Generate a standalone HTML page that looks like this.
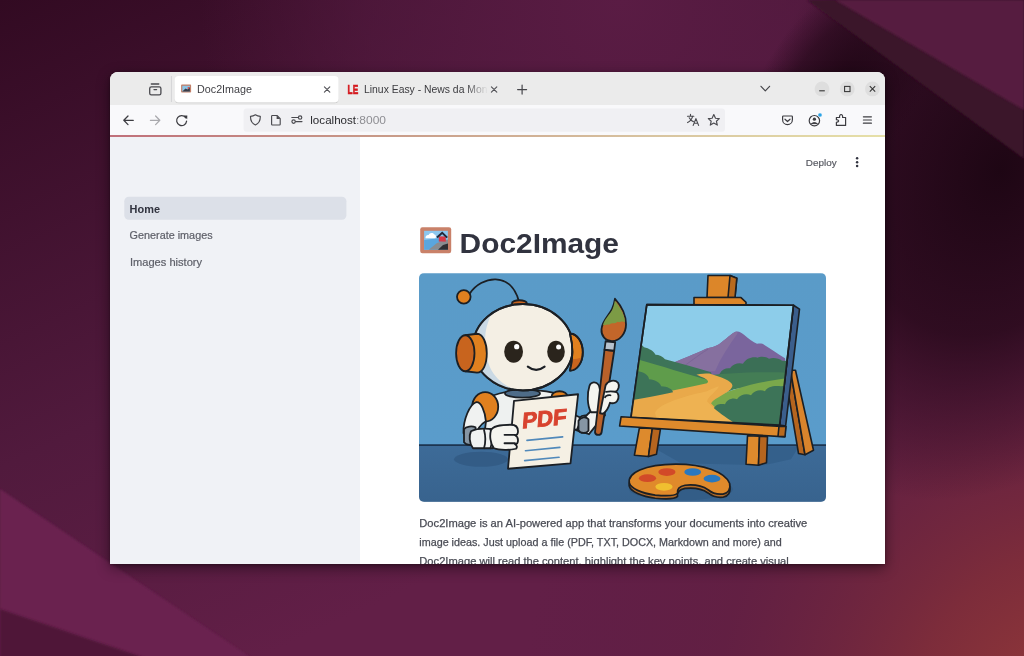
<!DOCTYPE html>
<html><head><meta charset="utf-8">
<style>
*{margin:0;padding:0;box-sizing:border-box}
html,body{width:1024px;height:656px;overflow:hidden;font-family:"Liberation Sans",sans-serif}
body{position:relative;background:#3a0f2c}
.abs{position:absolute}
#bg{position:absolute;left:0;top:0}
#win{position:absolute;left:110px;top:72px;width:775px;height:492px;border-radius:8px 8px 0 0;overflow:hidden;background:#fff;box-shadow:0 4px 14px rgba(0,0,0,.45),0 1px 3px rgba(0,0,0,.3)}
#tabs{position:absolute;left:0;top:0;width:775px;height:33px;background:#ebebeb}
#toolbar{position:absolute;left:0;top:33px;width:775px;height:31px;background:#f9f9fb}
#deco{position:absolute;left:0;top:63px;width:775px;height:2.4px;background:linear-gradient(90deg,#c0707a,#c89a88 35%,#d8c4a0 70%,#e6e0a8)}
#side{position:absolute;left:0;top:65px;width:250px;height:427px;background:#f0f2f6}
#main{position:absolute;left:250px;top:65px;width:525px;height:427px;background:#fff}
.t{position:absolute;white-space:nowrap;transform-origin:0 0}
#chrome,#content,#illus svg{filter:blur(0.35px)}
</style></head><body>
<svg id="bg" width="1024" height="656" viewBox="0 0 1024 656">
  <defs>
    <linearGradient id="g0" gradientUnits="userSpaceOnUse" x1="0" y1="0" x2="300" y2="640">
      <stop offset="0" stop-color="#320a22"/>
      <stop offset="0.6" stop-color="#511a3d"/>
      <stop offset="1" stop-color="#621f47"/>
    </linearGradient>
    <radialGradient id="gtop" gradientUnits="userSpaceOnUse" cx="620" cy="0" r="420">
      <stop offset="0" stop-color="#5a1c44" stop-opacity="1"/>
      <stop offset="0.6" stop-color="#561b42" stop-opacity="0.6"/>
      <stop offset="1" stop-color="#551a40" stop-opacity="0"/>
    </radialGradient>
    <radialGradient id="gred" cx="1080" cy="720" r="560" gradientUnits="userSpaceOnUse">
      <stop offset="0" stop-color="#963b38"/>
      <stop offset="0.3" stop-color="#7e2d3a" stop-opacity="0.95"/>
      <stop offset="0.65" stop-color="#62203f" stop-opacity="0.5"/>
      <stop offset="1" stop-color="#5c1d43" stop-opacity="0"/>
    </radialGradient>
    <radialGradient id="gdark" gradientUnits="userSpaceOnUse" cx="1000" cy="170" r="300" gradientTransform="translate(1000 170) rotate(25) scale(0.85 1.15) translate(-1000 -170)">
      <stop offset="0" stop-color="#1e0614" stop-opacity="1"/>
      <stop offset="0.5" stop-color="#230818" stop-opacity="0.8"/>
      <stop offset="0.8" stop-color="#2a0a1e" stop-opacity="0.35"/>
      <stop offset="1" stop-color="#2a0a1e" stop-opacity="0"/>
    </radialGradient>
    <radialGradient id="gdark3" gradientUnits="userSpaceOnUse" cx="840" cy="90" r="110" gradientTransform="translate(840 90) rotate(35) scale(0.7 1.4) translate(-840 -90)">
      <stop offset="0" stop-color="#1e0614" stop-opacity="0.95"/>
      <stop offset="0.6" stop-color="#230818" stop-opacity="0.6"/>
      <stop offset="1" stop-color="#2a0a1e" stop-opacity="0"/>
    </radialGradient>
    <filter id="bl" x="-20%" y="-20%" width="140%" height="140%"><feGaussianBlur stdDeviation="0.8"/></filter>
  </defs>
  <rect width="1024" height="656" fill="url(#g0)"/>
  <rect width="1024" height="656" fill="url(#gtop)"/>
  <rect width="1024" height="656" fill="url(#gred)"/>
  <rect width="1024" height="656" fill="url(#gdark)"/>
  <rect width="1024" height="656" fill="url(#gdark3)"/>
  <polygon points="807,0 1024,0 1024,159" fill="#3a1229" filter="url(#bl)"/>
  <polygon points="835,0 1024,0 1024,110" fill="#561c41" filter="url(#bl)"/>
  <polygon points="0,489 284,680 0,680" fill="#6a2350" filter="url(#bl)"/>
  <polygon points="0,609 210,680 0,680" fill="#4f1939" filter="url(#bl)"/>
</svg>
<div id="win">
  <div id="tabs"></div>
  <div id="toolbar"></div>
  <div id="deco"></div>
  <div id="side"></div>
  <div id="main"></div>
</div>



<div id="illus" class="abs" style="left:419px;top:273px;width:407px;height:228.5px;border-radius:5px;overflow:hidden">
<svg width="407" height="229" viewBox="0 0 407 228.5">
  <defs>
    <clipPath id="cv"><polygon points="227.8,31.4 374.5,32 360.6,151.9 212,144"/></clipPath>
    <linearGradient id="sky" x1="0" y1="0" x2="0" y2="1"><stop offset="0" stop-color="#5a9bc8"/><stop offset="1" stop-color="#5a9ccb"/></linearGradient>
  </defs>
  <rect width="407" height="172" fill="url(#sky)"/>
  <linearGradient id="floor" x1="0" y1="0" x2="0" y2="1"><stop offset="0" stop-color="#3d6b98"/><stop offset="1" stop-color="#38638e"/></linearGradient>
  <rect y="171.6" width="407" height="57" fill="url(#floor)"/>
  <line x1="0" y1="171.8" x2="407" y2="171.8" stroke="#1d3550" stroke-width="1.7"/>
  <!-- floor shadows -->
  <ellipse cx="62" cy="186" rx="27" ry="7.5" fill="#335c86"/>
  <polygon points="232,173 380,173 372,186 345,192 262,190" fill="#34608b"/>

  <g stroke="#1b1f24" stroke-width="1.6" stroke-linejoin="round" stroke-linecap="round">
  <!-- back leg of easel -->
  <polygon points="366,100 371.5,97 386,181.5 379.5,180.2" fill="#b5651f"/>
  <polygon points="371.5,97 376.5,97 394.5,177 386,181.5" fill="#d9842c"/>
  <!-- easel post -->
  <polygon points="289,2.2 311,2.2 317.8,5 316,24.3 288,24.3" fill="#dc8629"/>
  <polygon points="311,2.2 317.8,5 316,24.3 309,24.3" fill="#b86a1e"/>
  <polygon points="275,24.3 322,24.3 327,29 327,32 275,32" fill="#dc8629"/>

  <!-- canvas side -->
  <polygon points="374.5,32 380.5,35.9 366.6,152.9 360.6,151.9" fill="#3b5e8c"/>
  <!-- canvas front -->
  <polygon points="227.8,31.4 374.5,32 360.6,151.9 212,144" fill="#8dcdea"/>
  </g>
  <g clip-path="url(#cv)">
    <!-- mountain -->
    <path d="M249 92 C262 86 278 80 287 75.5 C292 74 296 73.5 300 71 C307 66 313 60 316.5 58.6 C319.5 57.6 322 59 325 61.5 C330 65.5 334 69 338 70.6 C341 70.2 343 70 345 71.5 C352 76 358 80 366 85 L370 112 L249 112 Z" fill="#7a659d"/>
    <path d="M251 91 C262 86 278 80 287 75.5 C292 74 296 73.5 300 71 C307 66 313 60 316.5 58.6 C318.5 58 319 59 318 61 C310 72 302 84 296 98 L251 98 Z" fill="#86709f"/>
    <path d="M262 95 C272 88 282 80 289 76" fill="none" stroke="#6f5b90" stroke-width="0.8" opacity="0.6"/>
    <!-- right dark hills -->
    <path d="M301 100 C303 96 307 94.5 311 95 C314 90.5 320 89 324 90.5 C327 85 334 83 338.5 84.5 C342 82.5 348 83.5 350 85.5 C354 84 360 85 363 87.5 L372 88 L372 112 L292 112 Z" fill="#3b6f56"/>
    <!-- right mid green -->
    <path d="M280 103 C305 100 335 98 372 99.5 L372 112 C350 112 330 113 315 116 L280 130 Z" fill="#447d55"/>
    <!-- right light green -->
    <path d="M296 124 C312 116 340 108 372 104.5 L372 160 L280 160 L280 124 Z" fill="#7aa84b"/>
    <!-- left dark hills -->
    <path d="M210 70 C216 68 222 70 225 74 C230 75 235 78 236.5 81.5 C240 81.5 244 83.5 246 86 C262 90 278 95 292 99 L294 106 L210 106 Z" fill="#3d7458"/>
    <!-- left green field -->
    <path d="M210 85 L220 86.5 C240 92 268 101 292 107.5 L296 118 L210 130 Z" fill="#5f9c4b"/>
    <!-- road -->
    <path d="M277.4 101.4 C283 100.6 288 100.2 291.2 100.4 C302 104 316 108 313 114 C310 120 296 124 292 130 C300 140 318 146 325 152 L205 152 L205 126 C230 122 262 116 288 110 C292 107 284 104 277.4 101.4 Z" fill="#e9a94a"/>
    <path d="M236 140 C238 132 260 124 288 118 C292 116 296 114 300 113 C298 118 290 122 288 128 C296 138 310 144 318 152 L240 152 Z" fill="#f0b655" opacity="0.7"/>
    <!-- left dark bushes -->
    <path d="M205 92 C212 92 217 94 218 98 C224 98 230 102 230 106 C236 106 242 110 242 113 C248 113 254 116 254 119 C240 122 225 125 205 128 Z" fill="#3d7458"/>
    <!-- right dark bushes -->
    <path d="M295 135 C296 131 302 130 306 131 C308 126 314 124 318 126 C321 121 328 120 332 122 C335 117 342 116 346 118 C348 113 356 112 362 113 L372 112 L372 160 L330 160 C320 152 304 143 295 135 Z" fill="#3d7458"/>
  </g>
  <g stroke="#1b1f24" stroke-width="1.7" stroke-linejoin="round" stroke-linecap="round" fill="none">
    <polygon points="227.8,31.4 374.5,32 360.6,151.9 212,144"/>
  </g>

  <g stroke="#1b1f24" stroke-width="1.6" stroke-linejoin="round" stroke-linecap="round">
  <!-- easel legs front -->
  <polygon points="220.4,154.6 233.3,155.3 229.5,183.2 215.4,182" fill="#dd8a2d"/>
  <polygon points="233.3,155.3 241.4,156.1 237.5,180.9 229.5,183.2" fill="#b5651f"/>
  <polygon points="328.5,162.5 340.5,163 339.5,192 327,191" fill="#dd8a2d"/>
  <polygon points="340.5,163 348.5,163.5 347.5,189.5 339.5,192" fill="#b5651f"/>
  <!-- ledge -->
  <polygon points="202.1,143.5 366.6,153.5 365.8,163.6 200.6,152.8" fill="#de8a2c"/>
  <polygon points="360,153 367,153.3 366,163.3 359,163" fill="#b86a1e"/>
  </g>

  <!-- palette -->
  <ellipse cx="262" cy="216" rx="52" ry="11" fill="#335d87"/>
  <g stroke="#1b1f24" stroke-width="1.7" stroke-linejoin="round">
    <path d="M210.4 210.1 C208 200 225 191 257 190.8 C285 190.8 306 199 310.6 210 C312 216 309 220 304 220.8 C298 221.5 292 219 289 216.5 C284 213 276 211 266 212 C260 213 258 216 258.5 220 C256 222.5 248 223 236.2 221.8 C222 220 212 215 210.4 210.1 Z" fill="#b56c27" transform="translate(0 3.2)"/>
    <path d="M210.4 210.1 C208 200 225 191 257 190.8 C285 190.8 306 199 310.6 210 C312 216 309 220 304 220.8 C298 221.5 292 219 289 216.5 C284 213 276 211 266 212 C260 213 258 216 258.5 220 C256 222.5 248 223 236.2 221.8 C222 220 212 215 210.4 210.1 Z" fill="#e08a2b"/>
  </g>
  <ellipse cx="228.5" cy="204.9" rx="8.6" ry="3.9" fill="#d24a28"/>
  <ellipse cx="247.9" cy="198.8" rx="8.6" ry="3.9" fill="#d24a28"/>
  <ellipse cx="273.7" cy="198.8" rx="8.4" ry="3.8" fill="#2a78bf"/>
  <ellipse cx="293" cy="205.4" rx="8.4" ry="3.8" fill="#2a78bf"/>
  <ellipse cx="245" cy="213.6" rx="8.6" ry="3.9" fill="#f0c030"/>

  <!-- ROBOT -->
  <g stroke="#1b1f24" stroke-width="1.8" stroke-linejoin="round" stroke-linecap="round">
    <path d="M51 20 C62 3 92 -3 100 28.5" fill="none"/>
    <circle cx="44.8" cy="23.6" r="6.8" fill="#e0801f"/>
    <ellipse cx="100.4" cy="30" rx="7.5" ry="3" fill="#c8641e"/>

    <!-- torso -->
    <path d="M70 124 C88 115 124 115 142 122 L148 172 L64 172 Z" fill="#eef1f0"/>
    <!-- right shoulder -->
    <ellipse cx="140.5" cy="123.5" rx="8" ry="5.5" fill="#e0801f"/>
    <!-- right arm -->
    <path d="M145 136 C152 140 158 143 163 145 L168 160 C158 158 150 154 146 150 Z" fill="#eef1f0"/>
    <path d="M160.6 144.5 C163 141.5 169 141.5 172 144 L172 157 C169 160 163 160 160 158 Z" fill="#7f8e9b"/>
    <!-- neck -->
    <ellipse cx="103.5" cy="120.2" rx="17.5" ry="4.2" fill="#4e6c89"/>
    <!-- left shoulder pad -->
    <ellipse cx="66.2" cy="133.6" rx="13" ry="14.7" fill="#e0801f"/>
    <!-- upper arm -->
    <path d="M66.9 148 C66 138 62 128 57 129 C51 131 44 146 44.5 160 L58 162 C58 156 60 152 66.9 148 Z" fill="#f0f2f1"/>
    <!-- elbow -->
    <path d="M45 156 C47 153 53 152.5 56.5 154 L57 171 C53 172.5 47 172 45 169 Z" fill="#8696a4"/>
    <!-- forearm -->
    <path d="M52 158 C58 155 66 155 74 156 L74 175 L54 175 C50 170 50 162 52 158 Z" fill="#f0f2f1"/>
    <path d="M65 156.5 C66.5 162 66.5 170 65 175 M71.5 156 C73 162 73 170 71.5 175" fill="none"/>
  </g>
  <!-- ears behind? head -->
  <g stroke="#1b1f24" stroke-width="1.8" stroke-linejoin="round" stroke-linecap="round">
    <ellipse cx="103.9" cy="74" rx="50" ry="43.2" fill="#f4efe4"/>
  </g>
  <clipPath id="headclip"><ellipse cx="103.9" cy="74" rx="50" ry="43.2"/></clipPath>
  <path clip-path="url(#headclip)" d="M40 20 L84 20 C75 34 68 48 66.5 60 C65 74 67 90 75 101 C81 109 89 114 99 118 L40 125 Z" fill="#cad9e4"/>
  <g stroke="#1b1f24" stroke-width="2" fill="none"><ellipse cx="103.9" cy="74" rx="50" ry="43.2"/></g>
  <g stroke="#1b1f24" stroke-width="1.8" stroke-linejoin="round" stroke-linecap="round">
    <!-- left ear -->
    <path d="M46.3 62 L58 60.5 C64 60.5 67.8 70 67.8 80 C67.8 91 64 99.4 58 99.4 L46.3 98 Z" fill="#e0801f"/>
    <ellipse cx="46.3" cy="80" rx="9.2" ry="18" fill="#c8641e"/>
    <!-- right ear -->
    <path d="M151 60.5 C158 60 163.8 69 163.8 79 C163.8 89 158 97.5 151 97.3 C154 86 154 72 151 60.5 Z" fill="#e0801f"/>
    <path d="M153.2 86 C156 86 160 85 163.2 84 C162 92 157 97.5 151 97.3 C152.5 94 153 90 153.2 86 Z" fill="#c8641e" stroke="none"/>
    <path d="M151 60.5 C158 60 163.8 69 163.8 79 C163.8 89 158 97.5 151 97.3 C154 86 154 72 151 60.5 Z" fill="none"/>
  </g>
  <!-- face -->
  <ellipse cx="94.6" cy="78.4" rx="9.4" ry="11" fill="#2a241c"/>
  <ellipse cx="137" cy="78.4" rx="8.8" ry="11" fill="#2a241c"/>
  <circle cx="97.7" cy="73.4" r="2.6" fill="#fff"/>
  <circle cx="139.6" cy="73.8" r="2.5" fill="#fff"/>
  <path d="M108.8 93.3 Q117.2 99.8 125.6 93.3" fill="none" stroke="#1b1f24" stroke-width="2.1" stroke-linecap="round"/>

  <!-- brush -->
  <g stroke="#1b1f24" stroke-width="1.8" stroke-linejoin="round" stroke-linecap="round">
    <!-- right forearm -->
    <path d="M158 156 C160 150 166 143 174 136 L184 134 L186 142 C180 148 174 156 170 161 Z" fill="#f0f2f1"/>
    <path d="M159.5 147.5 C162 143.5 167 143 169.5 146 L169.5 157.5 C167 160.5 161.5 160.5 159.5 157 Z" fill="#8696a4"/>
    <!-- thumb -->
    <path d="M172 139 C168 132 168 120 170.5 112.5 C172 108.5 177 108 179.5 111.5 C181 114 182 126 182 139 Z" fill="#f4f4ef"/>
  </g>
  <g stroke="#1b1f24" stroke-width="1.8" stroke-linejoin="round" stroke-linecap="round">
    <path d="M185.5 76.5 L195.2 77.5 L182.6 159 C182 162.5 176.5 162.5 176 159 Z" fill="#b9612a"/>
    <path d="M186.6 68 L196.2 69 L195.2 77.5 L185.5 76.5 Z" fill="#b7c2cd"/>
    <path d="M196 25.5 C200 30 207 40 207 51 C207 60 201 67.8 193 67.8 C186 67.8 182 62 182.5 56 C183 48 190 42 193 36 C194.5 33 195.5 29 196 25.5 Z" fill="#c3662a"/>
  </g>
  <path d="M195.8 27.5 C199.5 32 205.8 40.5 206 49 C203 47 201 50 198.5 48.5 C196 51 193 49 190 51.5 C188 50.5 186 52 184 52 C185 46.5 190.5 41.5 193 37 C194.5 34 195.3 30.5 195.8 27.5 Z" fill="#7c9b45"/>
  <g stroke="#1b1f24" stroke-width="1.8" stroke-linejoin="round" stroke-linecap="round">
    <!-- fingers -->
    <path d="M186.6 112 C189 107 196 106 199 109.5 C201 112.5 199.5 117 196.5 118.5 C200 119.5 200.5 125 198 128 C196.5 130 193 130.5 191 129.5 C190 133 188 138 184 140.5 L181 140 Z" fill="#f4f4ef"/>
    <path d="M187 118.6 C190 118 194 118.2 196.5 118.5 M186 124 C187 122 190 121.5 191.5 122" fill="none"/>
  </g>

  <!-- paper -->
  <g stroke="#1b1f24" stroke-width="1.8" stroke-linejoin="round">
    <polygon points="95,127.6 159.1,121 151.5,190.1 89,195.5" fill="#f5f0e4"/>
  </g>
  <text x="0" y="0" transform="translate(102.8 155.2) rotate(-5.5) skewX(-10)" font-family="Liberation Sans, sans-serif" font-weight="700" font-size="22" fill="#d8432f" stroke="#d8432f" stroke-width="0.9" textLength="44.5" lengthAdjust="spacingAndGlyphs">PDF</text>
  <g stroke="#5189ba" stroke-width="1.7" stroke-linecap="round">
    <path d="M108 167.2 L143.6 163.7"/>
    <path d="M106.5 177.5 L140.8 174.1"/>
    <path d="M105.7 187.4 L140 184"/>
  </g>
  <!-- left fist -->
  <g stroke="#1b1f24" stroke-width="1.8" stroke-linejoin="round" stroke-linecap="round">
    <path d="M72 157 C74 152 84 151.5 92 151.5 C97 151.5 99 154 99 158 C99 161 97.5 162 96 162 C98.5 163 99 165 99 167 C99 170 97.5 171 96 171 C98 172 98.5 174 97 175.5 C92 177 80 177 75 175 C71 170 70.5 162 72 157 Z" fill="#f4f4ef"/>
    <path d="M85.5 161.6 H96 M85.5 170 H96" fill="none"/>
  </g>
</svg>
</div>
<svg id="content" class="abs" style="left:0;top:0" width="1024" height="656" viewBox="0 0 1024 656" font-family="Liberation Sans, sans-serif">
  <rect x="124.3" y="196.8" width="222.1" height="23" rx="4.5" fill="#dce0e8"/>
  <text x="129.6" y="212.7" font-size="10.4" font-weight="700" fill="#31333f" textLength="30.4" lengthAdjust="spacingAndGlyphs">Home</text>
  <text x="129.6" y="239.3" font-size="10.4" fill="#5d5f68" stroke="#5d5f68" stroke-width="0.2" textLength="83" lengthAdjust="spacingAndGlyphs">Generate images</text>
  <text x="129.9" y="265.8" font-size="10.4" fill="#5d5f68" stroke="#5d5f68" stroke-width="0.2" textLength="72.2" lengthAdjust="spacingAndGlyphs">Images history</text>
  <text x="805.8" y="166" font-size="9" fill="#55575f" stroke="#55575f" stroke-width="0.15" textLength="30.8" lengthAdjust="spacingAndGlyphs">Deploy</text>
  <circle cx="857.1" cy="158.3" r="1.25" fill="#31333f"/>
  <circle cx="857.1" cy="162.2" r="1.25" fill="#31333f"/>
  <circle cx="857.1" cy="166" r="1.25" fill="#31333f"/>
  <g id="emoji">
    <rect x="420.2" y="227.2" width="31" height="26.1" rx="2.2" fill="#c98169"/>
    <rect x="424.1" y="230.8" width="23.8" height="18.9" fill="#8cc6ee"/>
    <path d="M424.1 240 L440 238 L447.9 240 V249.7 H424.1 Z" fill="#5aa6de"/>
    <path d="M425.6 238.3 C425 236 427 234.6 428.6 235 C429.4 232.6 433 232.2 434.2 234.4 C436 234.2 436.6 237 435.3 238.3 Z" fill="#fff"/>
    <path d="M428.7 249.7 L437 243 L448 239.5 V249.7 Z" fill="#8a8c90"/>
    <path d="M438 249.7 L443 245 L448 243.5 V249.7 Z" fill="#2e2e32"/>
    <rect x="438.8" y="236.4" width="7" height="5.2" fill="#d83a48"/>
    <path d="M437 237.6 L442.2 232.8 L447.2 237.6" fill="none" stroke="#23283a" stroke-width="2"/>
  </g>
  <text x="459.6" y="252.7" font-size="27.7" font-weight="700" fill="#31333f" textLength="159.4" lengthAdjust="spacingAndGlyphs">Doc2Image</text>
  <clipPath id="winclip"><rect x="110" y="72" width="775" height="492"/></clipPath>
  <g font-size="10.8" fill="#4a4c55" stroke="#4a4c55" stroke-width="0.25" clip-path="url(#winclip)">
    <text x="419.3" y="526.8" textLength="388" lengthAdjust="spacingAndGlyphs">Doc2Image is an AI-powered app that transforms your documents into creative</text>
    <text x="419.3" y="545.7" textLength="362.5" lengthAdjust="spacingAndGlyphs">image ideas. Just upload a file (PDF, TXT, DOCX, Markdown and more) and</text>
    <text x="419.3" y="564.6" textLength="369.5" lengthAdjust="spacingAndGlyphs">Doc2Image will read the content, highlight the key points, and create visual</text>
  </g>
</svg>
<svg id="chrome" class="abs" style="left:0;top:0" width="1024" height="656" viewBox="0 0 1024 656" font-family="Liberation Sans, sans-serif">
  <defs>
    <linearGradient id="fade" gradientUnits="userSpaceOnUse" x1="466" y1="0" x2="488" y2="0">
      <stop offset="0" stop-color="#3a3a3e"/>
      <stop offset="1" stop-color="#3a3a3e" stop-opacity="0"/>
    </linearGradient>
    <filter id="tabsh" x="-10%" y="-30%" width="120%" height="160%"><feDropShadow dx="0" dy="0.6" stdDeviation="0.7" flood-color="#000" flood-opacity="0.22"/></filter>
  </defs>
  <!-- firefox view icon -->
  <g fill="none" stroke="#4a4a4f" stroke-width="1.3" stroke-linecap="round" stroke-linejoin="round">
    <path d="M151.3 84 H158.8"/>
    <rect x="149.7" y="86.8" width="11.2" height="8" rx="1.6"/>
    <path d="M154 89.6 H156.6"/>
  </g>
  <line x1="171.4" y1="76" x2="171.4" y2="102" stroke="#d4d4d6" stroke-width="1"/>
  <!-- active tab -->
  <rect x="174.6" y="76" width="164" height="26.2" rx="4" fill="#fff" filter="url(#tabsh)"/>
  <!-- favicon frame -->
  <g>
    <rect x="181.1" y="84.6" width="10" height="8" rx="0.8" fill="#c1806a"/>
    <rect x="182.3" y="85.8" width="7.6" height="5.6" fill="#8cc4e6"/>
    <path d="M182.3 91.4 L185.5 88.5 L187.5 89.6 L189.9 87 V91.4 Z" fill="#3a3d48"/>
    <circle cx="188.4" cy="88" r="0.9" fill="#d84a4a"/>
  </g>
  <text x="197" y="92.5" font-size="10" fill="#3f3f44" textLength="55" lengthAdjust="spacingAndGlyphs">Doc2Image</text>
  <g stroke="#505055" stroke-width="1.1" stroke-linecap="round"><path d="M324.4 86.8 L329.8 92.2 M329.8 86.8 L324.4 92.2"/></g>
  <!-- second tab -->
  <text x="347.6" y="94" font-size="13.6" font-weight="700" fill="#d41a1f" stroke="#d41a1f" stroke-width="0.7" textLength="10.6" lengthAdjust="spacingAndGlyphs">LE</text>
  <text x="364" y="92.6" font-size="10" fill="url(#fade)" textLength="123.5" lengthAdjust="spacingAndGlyphs">Linux Easy - News da Mon</text>
  <g stroke="#505055" stroke-width="1.1" stroke-linecap="round"><path d="M491.4 86.8 L496.8 92.2 M496.8 86.8 L491.4 92.2"/></g>
  <g stroke="#45454a" stroke-width="1.2" stroke-linecap="round"><path d="M517.6 89.6 H526.6 M522.1 85.1 V94.1"/></g>
  <!-- chevron -->
  <path d="M761 86.3 L765.3 90.9 L769.6 86.3" fill="none" stroke="#45454a" stroke-width="1.2" stroke-linecap="round" stroke-linejoin="round"/>
  <!-- window controls -->
  <circle cx="822" cy="88.9" r="7.4" fill="#dedede"/>
  <circle cx="847.3" cy="88.9" r="7.4" fill="#dedede"/>
  <circle cx="872.4" cy="88.9" r="7.4" fill="#dedede"/>
  <path d="M819.2 90.8 H824.8" stroke="#333" stroke-width="1.1"/>
  <rect x="844.6" y="86.4" width="5.4" height="5.2" fill="none" stroke="#333" stroke-width="1.05"/>
  <path d="M869.8 86.2 L875.2 91.6 M875.2 86.2 L869.8 91.6" stroke="#333" stroke-width="1.05"/>

  <!-- toolbar icons -->
  <g fill="none" stroke="#3c3c41" stroke-width="1.25" stroke-linecap="round" stroke-linejoin="round">
    <path d="M123.8 120.3 H133.3 M128 116 L123.8 120.3 L128 124.6"/>
    <path d="M150.4 120.3 H159.8 M155.6 116 L159.8 120.3 L155.6 124.6" stroke="#a9a9ad"/>
    <path d="M185.8 117.8 A5 5 0 1 0 186.6 121.2"/>
  </g>
  <path d="M183.2 115.6 L187.3 115.4 L187.2 119.3 Z" fill="#3c3c41"/>
  <!-- url bar -->
  <rect x="243.6" y="108.6" width="481.4" height="23.1" rx="3" fill="#f0f0f3"/>
  <g fill="none" stroke="#4a4a4f" stroke-width="1.15" stroke-linecap="round" stroke-linejoin="round">
    <path d="M255.4 114.8 C253.8 115.9 252.2 116.3 250.5 116.3 C250.4 120.4 252 123.4 255.4 125 C258.8 123.4 260.4 120.4 260.3 116.3 C258.6 116.3 257 115.9 255.4 114.8 Z"/>
    <path d="M272.3 115.5 H277 L280.2 118.7 V124.3 Q280.2 125 279.5 125 H272.3 Q271.6 125 271.6 124.3 V116.2 Q271.6 115.5 272.3 115.5 Z"/>
    <path d="M291.8 117.5 H298 M295.6 121.6 H302 "/>
    <circle cx="300.1" cy="117.5" r="1.7"/>
    <circle cx="293.6" cy="121.6" r="1.7"/>
  </g>
  <path d="M276.6 115.5 L280.2 119.1 L276.6 119.1 Z" fill="#4a4a4f"/>
  <text x="310.3" y="123.6" font-size="11.2" fill="#2a2a2e" textLength="45.8" lengthAdjust="spacingAndGlyphs">localhost</text>
  <text x="356" y="123.6" font-size="11.2" fill="#8e8e93" textLength="30" lengthAdjust="spacingAndGlyphs">:8000</text>
  <!-- translate -->
  <g fill="none" stroke="#4a4a4f" stroke-width="1.15" stroke-linecap="round" stroke-linejoin="round">
    <path d="M687.5 116.2 H693.8 M690.5 114.4 V116.2 M692.6 116.2 C692 119.4 690 121.4 687.6 122.6 M689.2 117.8 C690.3 119.8 691.8 121 693.4 121.6"/>
    <path d="M693.2 125.4 L695.9 118.6 L698.6 125.4 M694.2 123.2 H697.6"/>
  </g>
  <path d="M713.8 114.6 L715.5 118.2 L719.3 118.6 L716.4 121.2 L717.3 125.1 L713.8 123.1 L710.3 125.1 L711.2 121.2 L708.3 118.6 L712.1 118.2 Z" fill="none" stroke="#4a4a4f" stroke-width="1.15" stroke-linejoin="round"/>
  <!-- right toolbar -->
  <g fill="none" stroke="#3c3c41" stroke-width="1.2" stroke-linecap="round" stroke-linejoin="round">
    <path d="M783.4 116 H791.6 Q792.4 116 792.4 116.8 V119.4 C792.4 122.4 790.2 124.6 787.5 124.6 C784.8 124.6 782.6 122.4 782.6 119.4 V116.8 Q782.6 116 783.4 116 Z"/>
    <path d="M785 119.2 L787.5 121.5 L790 119.2"/>
    <circle cx="814.4" cy="120.7" r="5.2"/>
    <path d="M836.4 125.4 H845.6 V117.5 H842.6 C842.9 115.6 842 114.5 841.1 114.5 C840.2 114.5 839.3 115.6 839.6 117.5 H836.4 V119.7 C838 120 838.7 120.5 838.7 121 C838.7 121.5 838 122 836.4 122.3 Z"/>
    <path d="M863.4 116.8 H871.4 M863.4 120 H871.4 M863.4 123.2 H871.4"/>
  </g>
  <circle cx="814.4" cy="119.2" r="1.6" fill="#3c3c41"/>
  <path d="M811.4 123.6 Q814.4 121.4 817.4 123.6 Z" fill="#3c3c41" stroke="#3c3c41" stroke-width="1"/>
  <circle cx="820" cy="115" r="2.1" fill="#2aa3e6" stroke="#f9f9fb" stroke-width="0.5"/>
</svg>
</body></html>
